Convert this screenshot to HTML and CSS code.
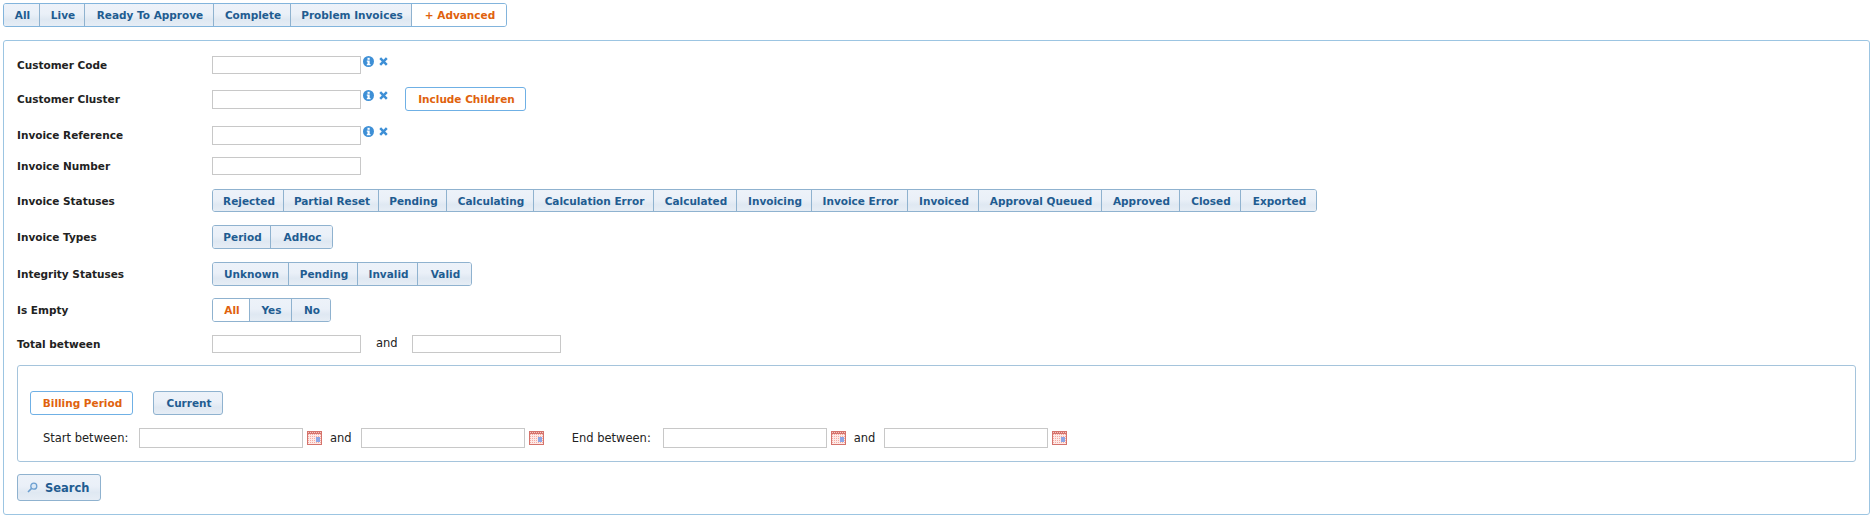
FILE: index.html
```html
<!DOCTYPE html>
<html lang="en">
<head>
<meta charset="utf-8">
<title>Invoices</title>
<link rel="stylesheet" href="styles.css">
</head>
<body>
<svg class="defs" width="0" height="0" aria-hidden="true">
  <defs>
    <symbol id="i-info" viewBox="0 0 11 11">
      <circle cx="5.5" cy="5.5" r="5.5" fill="#3d8fd6"/>
      <rect x="4.5" y="1.8" width="2.2" height="2" fill="#fff"/>
      <path d="M3.8 4.6h2.9v3.5h.8v1.1H3.8V8.1h.7V5.7h-.7z" fill="#fff"/>
    </symbol>
    <symbol id="i-x" viewBox="0 0 9 9">
      <path d="M1.2 1.2l6.6 6.6M7.8 1.2L1.2 7.8" stroke="#3d8fd6" stroke-width="2.5" fill="none"/>
    </symbol>
    <symbol id="i-cal" viewBox="0 0 15 14">
      <rect x="0" y="0" width="15" height="14" fill="#d4736c"/>
      <rect x="1" y="3" width="13" height="10" fill="#f4aaa3"/>
      <path d="M1 4.500h13M1 6.500h13M1 8.500h13M1 10.500h13M1 12.500h13M2.500 3v10M4.500 3v10M6.500 3v10M8.500 3v10M10.500 3v10M12.500 3v10" stroke="#fde9e6" stroke-width="1" fill="none"/>
      <rect x="9" y="6" width="4" height="5" fill="#8ca6e6"/>
      <path d="M1 1.500h13" stroke="#f7c4bf" stroke-width="1" stroke-dasharray="1 1"/>
    </symbol>
    <symbol id="i-search" viewBox="0 0 11 11">
      <circle cx="6.800" cy="4.200" r="3" fill="#dbe8f5" stroke="#6c9fd0" stroke-width="1.300"/>
      <path d="M4.600 6.400L1 10" stroke="#6c9fd0" stroke-width="1.600"/>
    </symbol>
  </defs>
</svg>

<nav class="seg seg-tabs">
  <button class="btn">All</button>
  <button class="btn">Live</button>
  <button class="btn">Ready To Approve</button>
  <button class="btn">Complete</button>
  <button class="btn">Problem Invoices</button>
  <button class="btn on">+ Advanced</button>
</nav>

<section class="panel">
  <div class="form">
    <label class="lbl">Customer Code</label>
    <div class="ctl"><input class="txt"><svg class="ic-info"><use href="#i-info"/></svg><svg class="ic-x"><use href="#i-x"/></svg></div>

    <label class="lbl">Customer Cluster</label>
    <div class="ctl"><input class="txt txt-tall"><svg class="ic-info"><use href="#i-info"/></svg><svg class="ic-x"><use href="#i-x"/></svg><button class="btn solo on include">Include Children</button></div>

    <label class="lbl">Invoice Reference</label>
    <div class="ctl"><input class="txt txt-tall"><svg class="ic-info"><use href="#i-info"/></svg><svg class="ic-x"><use href="#i-x"/></svg></div>

    <label class="lbl">Invoice Number</label>
    <div class="ctl"><input class="txt"></div>

    <label class="lbl">Invoice Statuses</label>
    <div class="ctl">
      <div class="seg seg-status">
        <button class="btn">Rejected</button>
        <button class="btn">Partial Reset</button>
        <button class="btn">Pending</button>
        <button class="btn">Calculating</button>
        <button class="btn">Calculation Error</button>
        <button class="btn">Calculated</button>
        <button class="btn">Invoicing</button>
        <button class="btn">Invoice Error</button>
        <button class="btn">Invoiced</button>
        <button class="btn">Approval Queued</button>
        <button class="btn">Approved</button>
        <button class="btn">Closed</button>
        <button class="btn">Exported</button>
      </div>
    </div>

    <label class="lbl">Invoice Types</label>
    <div class="ctl">
      <div class="seg seg-types">
        <button class="btn">Period</button>
        <button class="btn">AdHoc</button>
      </div>
    </div>

    <label class="lbl">Integrity Statuses</label>
    <div class="ctl">
      <div class="seg seg-integrity">
        <button class="btn">Unknown</button>
        <button class="btn">Pending</button>
        <button class="btn">Invalid</button>
        <button class="btn">Valid</button>
      </div>
    </div>

    <label class="lbl">Is Empty</label>
    <div class="ctl">
      <div class="seg seg-empty">
        <button class="btn on">All</button>
        <button class="btn">Yes</button>
        <button class="btn">No</button>
      </div>
    </div>

    <label class="lbl">Total between</label>
    <div class="ctl"><input class="txt"><span class="and and-total">and</span><input class="txt"></div>
  </div>

  <div class="period">
    <div class="period-tabs">
      <button class="btn solo on billing">Billing Period</button>
      <button class="btn solo current">Current</button>
    </div>
    <div class="dates">
      <span class="dlabel start">Start between:</span>
      <input class="txt date"><svg class="ic-cal"><use href="#i-cal"/></svg>
      <span class="and">and</span>
      <input class="txt date"><svg class="ic-cal"><use href="#i-cal"/></svg>
      <span class="dlabel end">End between:</span>
      <input class="txt date"><svg class="ic-cal"><use href="#i-cal"/></svg>
      <span class="and">and</span>
      <input class="txt date"><svg class="ic-cal"><use href="#i-cal"/></svg>
    </div>
  </div>

  <button class="btn solo search"><svg class="ic-search"><use href="#i-search"/></svg>Search</button>
</section>
</body>
</html>
```

FILE: styles.css
```css
* { box-sizing: border-box; }
html, body { margin: 0; background: #fff; }
body {
  padding: 3px 3px 0;
  font-family: "DejaVu Sans", "Liberation Sans", sans-serif;
  font-size: 11px;
  color: #222;
}
.defs { position: absolute; }

.btn {
  display: block;
  margin: 0;
  padding: 0 0 0 2px;
  height: 100%;
  border: 0;
  border-right: 1px solid #8fb2cf;
  background: linear-gradient(#edf2f9 0%, #eaf0f8 45%, #dfe8f2 70%, #e6edf5 100%);
  color: #1f5c91;
  font: bold 10.500px "DejaVu Sans", "Liberation Sans", sans-serif;
  text-align: center;
  white-space: nowrap;
}
.btn:last-child { border-right: 0; }
.btn.on { background: #fff; color: #e0620d; }

.seg {
  display: grid;
  width: max-content;
  height: 24px;
  border: 1px solid #8fb2cf;
  border-radius: 3px;
  overflow: hidden;
}
.seg-tabs {
  height: 24px;
  grid-template-columns: 36px 45px 129px 77px 121px 94px;
  border-color: #82b4dc;
}
.seg-status {
  height: 23px;
  grid-template-columns: 71px 95px 68px 87px 120px 83px 75px 96px 71px 123px 78px 61px 75px;
}
.seg-types { grid-template-columns: 58px 61px; }
.seg-integrity { grid-template-columns: 76px 69px 60px 53px; }
.seg-empty { grid-template-columns: 37px 42px 38px; }

.solo {
  height: 24px;
  border: 1px solid #8fb2cf;
  border-radius: 3px;
}
.solo:last-child { border-right: 1px solid #8fb2cf; }
.solo.on, .solo.on:last-child { border: 1px solid #6fb0e5; }

.panel {
  margin-top: 13px;
  height: 475px;
  padding: 7px 13px 0 13px;
  border: 1px solid #9cc5e2;
  border-radius: 3px;
}
.form {
  display: grid;
  grid-template-columns: 195px 1fr;
  grid-template-rows: 34px 34px 38px 24px 45px 27px 47px 26px 41px;
}
.lbl {
  display: flex;
  align-items: center;
  font-weight: bold;
  font-size: 10.500px;
  color: #222;
}
.ctl { display: flex; align-items: center; position: relative; }

.txt {
  display: block;
  width: 149px;
  height: 18px;
  margin: 0;
  padding: 0;
  border: 1px solid #c8c8c8;
  background: #fff;
}
.txt-tall { height: 19px; }
.ic-info { width: 11px; height: 11px; margin: -8px 0 0 2px; }
.ic-x { width: 9px; height: 9px; margin: -8px 0 0 5px; }
.include { width: 121px; margin-left: 17px; }
.and { font-size: 11.500px; color: #222; }
.and-total { margin: -2px 14px 0 15px; }

.period {
  width: 1839px;
  height: 97px;
  margin-top: 1px;
  padding: 25px 12px 0;
  border: 1px solid #a5c4dc;
  border-radius: 3px;
}
.period-tabs { display: flex; gap: 20px; }
.billing { width: 103px; }
.current { width: 70px; }
.dates { display: flex; align-items: center; height: 20px; margin-top: 13px; }
.dlabel { font-size: 11.500px; color: #222; }
.start { width: 109px; padding-left: 13px; }
.end { width: 91px; margin-left: 28px; }
.date { width: 164px; height: 20px; }
.ic-cal { width: 15px; height: 14px; margin: 0 8px 0 4px; flex: none; }
.dates .and { margin-right: 9px; }
.ic-cal:nth-of-type(2) { margin-right: 0; }

.search {
  display: flex;
  align-items: center;
  width: 84px;
  height: 27px;
  margin-top: 12px;
  padding-left: 9px;
  font-size: 11.500px;
}
.ic-search { width: 11px; height: 11px; margin-right: 7px; flex: none; }
```
